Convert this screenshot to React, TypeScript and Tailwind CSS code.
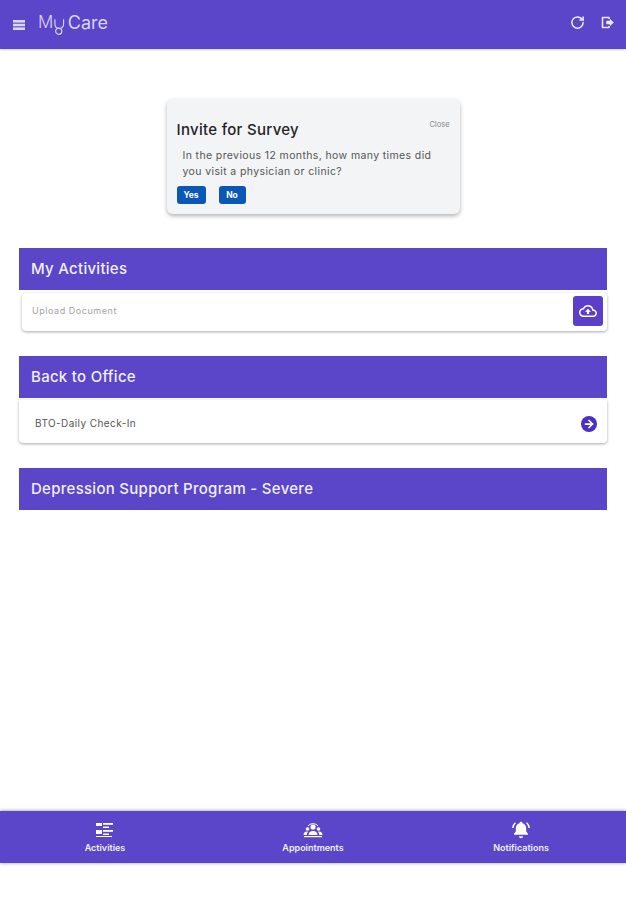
import { ArrowRight, RotateCw } from 'lucide-react';

const FONT = "font-['Inter','Noto_Sans',sans-serif]";

function SectionHeader({ title }: { title: string }) {
  return (
    <div className="flex h-[42px] items-center bg-[#5b45c9] pl-3 text-[15px] font-medium tracking-[0.28px] text-[#f1effb]">
      {title}
    </div>
  );
}

function NavItem({ icon, label }: { icon: React.ReactNode; label: string }) {
  return (
    <div className="flex w-[140px] flex-col items-center">
      <div className="flex h-5 items-center justify-center text-white">{icon}</div>
      <div className="mt-[2px] text-[9px] font-semibold leading-3 text-[#f1effb]">{label}</div>
    </div>
  );
}

function ActivitiesIcon() {
  return (
    <svg width="18" height="16" viewBox="0 0 18 16" fill="white">
      <rect x="0" y="1" width="6" height="3" />
      <rect x="7" y="1" width="10" height="1.800" />
      <rect x="7" y="4.500" width="6" height="1.500" />
      <rect x="0" y="8" width="6" height="4" />
      <rect x="7" y="8" width="10" height="1.800" />
      <rect x="7" y="11.500" width="6" height="1.500" />
      <rect x="0" y="14" width="16" height="1" />
    </svg>
  );
}

function AppointmentsIcon() {
  return (
    <svg width="20" height="16" viewBox="0 0 20 16" fill="white">
      <circle cx="10" cy="5" r="2.600" />
      <circle cx="4.500" cy="7" r="1.800" />
      <circle cx="15.500" cy="7" r="1.800" />
      <path d="M5.500 13c0-2.600 2-4 4.500-4s4.500 1.400 4.500 4z" />
      <path d="M0.500 13c0-2 1.300-3.400 3.400-3.400.5 0 .8.1 1 .2-.7.8-1.100 1.900-1.100 3.200zM19.500 13c0-2-1.300-3.400-3.400-3.400-.5 0-.8.1-1 .2.7.8 1.100 1.900 1.100 3.200z" />
      <path d="M5 4a5.500 4 0 0 1 10 0" fill="none" stroke="white" strokeWidth="1" />
      <rect x="1" y="14" width="18" height="1.200" />
    </svg>
  );
}

function BellIcon() {
  return (
    <svg width="20" height="18" viewBox="0 0 20 18" fill="white">
      <path d="M10 .8c.9 0 1.500.6 1.500 1.400 2.500.6 3.700 2.700 3.700 5.200v3l1.800 2.400v1H3v-1l1.800-2.400v-3c0-2.500 1.200-4.600 3.700-5.200C8.500 1.400 9.100.8 10 .8z" />
      <path d="M8 15.200h4c0 1-.9 2-2 2s-2-1-2-2z" />
      <path d="M4.400 1.800C2.900 3.100 2 4.800 1.800 7M15.600 1.800c1.500 1.300 2.400 3 2.600 5.200" fill="none" stroke="white" strokeWidth="1.500" />
    </svg>
  );
}

function Logo() {
  return (
    <div className="flex h-[30px] w-[70px] items-center text-[#d9d3f3]">
      <span className="text-[17px] font-light leading-none">M</span>
      <svg width="14" height="22" viewBox="0 0 14 22" fill="none" stroke="currentColor" strokeWidth="1.200" className="mt-[6px]">
        <path d="M2 4v5c0 3 2 4.500 4.500 4.500S11 12 11 9V4" />
        <circle cx="6" cy="16.500" r="3.200" />
      </svg>
      <span className="ml-[1px] text-[18px] font-normal leading-none">Care</span>
    </div>
  );
}

export default function App() {
  return (
    <div className={`flex h-[900px] w-[626px] flex-col bg-white ${FONT}`}>
      <header className="flex h-[49px] shrink-0 items-center justify-between bg-[#5b45c9] pb-[4px] pl-[13px] pr-[11px] shadow-[0_1px_2px_rgba(0,0,0,0.2)]">
        <div className="flex items-center gap-[13px]">
          <svg width="12" height="10" viewBox="0 0 12 10" fill="#dcd7f5" className="mt-[5px]">
            <rect x="0" y="0" width="12" height="2.600" />
            <rect x="0" y="3.700" width="12" height="2.600" />
            <rect x="0" y="7.400" width="12" height="2.600" />
          </svg>
          <Logo />
        </div>
        <div className="flex items-center gap-[15px] text-[#ece9fa]">
          <RotateCw size={15} strokeWidth={2.400} />
          <svg width="15" height="15" viewBox="0 0 15 15" fill="none" stroke="currentColor" strokeWidth="1.600">
            <path d="M9 4V2.500H2.500v10H9V11" strokeLinejoin="round" />
            <path d="M6.500 6h3.500V4.300l3.500 3.200L10 10.700V9H6.500z" fill="currentColor" strokeWidth="0.500" strokeLinejoin="round" />
          </svg>
        </div>
      </header>

      <main className="flex-1 px-[19px]">
        <div className="mx-auto mt-[50px] h-[115px] w-[293px] rounded-[6px] bg-[#f3f4f6] pl-[10px] pr-[10px] pt-[19px] shadow-[0_2px_4px_rgba(0,0,0,0.3)]">
          <div className="flex items-start justify-between">
            <div className="text-[15px] font-medium leading-6 tracking-[0.3px] text-[#1f2226]">Invite for Survey</div>
            <div className="mt-[1px] text-[7.500px] leading-3 text-[#8a8a8a]">Close</div>
          </div>
          <p className="mt-[6px] pl-[6px] text-[10.500px] leading-[16px] tracking-[0.38px] text-[#555]">
            In the previous 12 months, how many times did you visit a physician or clinic?
          </p>
          <div className="mt-[6px] flex gap-[13px]">
            <button className="flex h-[18px] w-[29px] items-center justify-center rounded-[3px] bg-[#0b57b5] text-[8.500px] font-bold text-white">Yes</button>
            <button className="flex h-[18px] w-[27px] items-center justify-center rounded-[3px] bg-[#0b57b5] text-[8.500px] font-bold text-white">No</button>
          </div>
        </div>

        <section className="mt-[34px]">
          <SectionHeader title="My Activities" />
          <div className="ml-[3px] mt-[3px] flex h-[38px] items-center justify-between rounded-[4px] bg-white pb-[2px] pl-[10px] pr-[4px] shadow-[0_1px_3px_rgba(0,0,0,0.35)]">
            <span className="text-[9px] tracking-[0.55px] text-[#a3a3a3]">Upload Document</span>
            <button className="flex h-[30px] w-[30px] items-center justify-center rounded-[3px] bg-[#5b3fca] text-white">
              <svg width="18" height="18" viewBox="0 0 24 24" fill="currentColor">
                <path d="M19.350 10.040C18.670 6.590 15.640 4 12 4 9.110 4 6.600 5.640 5.350 8.040 2.340 8.360 0 10.910 0 14c0 3.310 2.690 6 6 6h13c2.760 0 5-2.240 5-5 0-2.640-2.050-4.780-4.650-4.960zM19 18H6c-2.210 0-4-1.790-4-4 0-2.050 1.530-3.760 3.560-3.970l1.070-.11.500-.950C8.080 7.140 9.940 6 12 6c2.620 0 4.880 1.860 5.390 4.430l.300 1.500 1.530.110c1.560.100 2.780 1.410 2.780 2.960 0 1.650-1.350 3-3 3zM8 13h2.550v3h2.900v-3H16l-4-4z" />
              </svg>
            </button>
          </div>
        </section>

        <section className="mt-[25px]">
          <SectionHeader title="Back to Office" />
          <div className="mt-[2px] flex h-[43px] items-center justify-between rounded-b-[4px] bg-white pl-[16px] pr-[10px] shadow-[0_1px_3px_rgba(0,0,0,0.35)]">
            <span className="mt-[3px] text-[10px] tracking-[0.42px] text-[#555]">BTO-Daily Check-In</span>
            <span className="mt-[4px] flex h-4 w-4 items-center justify-center rounded-full bg-[#4a2fc4] text-white">
              <ArrowRight size={12} strokeWidth={3.500} />
            </span>
          </div>
        </section>

        <section className="mt-[25px]">
          <SectionHeader title="Depression Support Program - Severe" />
        </section>
      </main>

      <nav className="mb-[37px] flex h-[52px] shrink-0 items-center justify-between bg-[#5b45c9] pl-[35px] pr-[35px] shadow-[0_-1px_3px_rgba(0,0,0,0.25),0_1px_3px_rgba(0,0,0,0.2)]">
        <NavItem icon={<ActivitiesIcon />} label="Activities" />
        <NavItem icon={<AppointmentsIcon />} label="Appointments" />
        <NavItem icon={<BellIcon />} label="Notifications" />
      </nav>
    </div>
  );
}
